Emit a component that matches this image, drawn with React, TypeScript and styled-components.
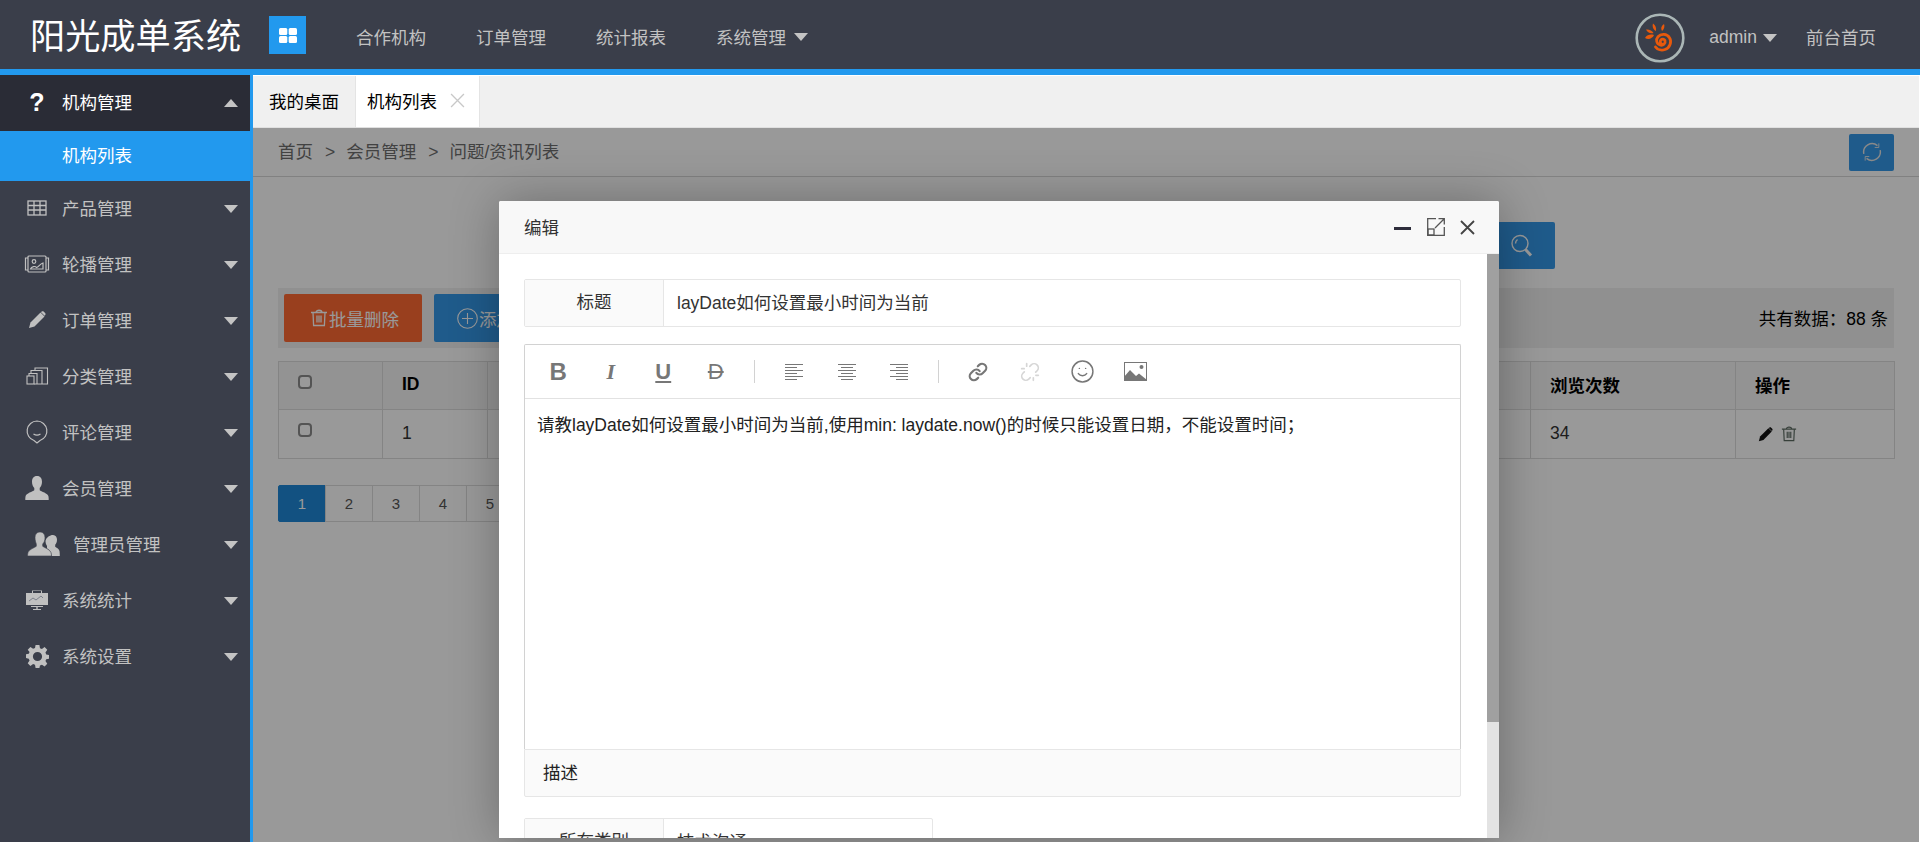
import React from "react";
import styled, { createGlobalStyle } from "styled-components";
import { Link, Unlink, Smile } from "lucide-react";

const Global = createGlobalStyle`
  html, body { margin: 0; padding: 0; background: #fff; overflow: hidden; }
  * { box-sizing: border-box; }
  body { font-family: "Liberation Sans", "Noto Sans CJK SC", sans-serif; font-size: 17.5px; color: #333; }
`;

const Shell = styled.div`
  width: 1920px; height: 842px; display: flex; flex-direction: column; overflow: hidden;
`;
const Header = styled.header`
  height: 75px; flex: none; background: #3a3e4a; border-bottom: 6px solid #2299ee;
  display: flex; align-items: center; color: #c2c2c2;
`;
const Brand = styled.div`
  width: 269px; padding: 5px 0 0 30px; font-size: 35.2px; color: #fff; line-height: 64px; height: 69px; white-space: nowrap; flex: none;
`;
const AppTile = styled.div`
  width: 37px; height: 38px; flex: none; background: #2299ee; margin-top: 1px;
  display: flex; align-items: center; justify-content: center;
`;
const Nav = styled.nav`
  display: flex; gap: 50px; margin-left: 50px; flex: 1; padding-top: 3px;
`;
const NavItem = styled.a`
  display: flex; align-items: center; gap: 8px; color: #c2c2c2; white-space: nowrap;
`;
const NavCaretSlot = styled.span`
  display: flex; padding-top: 2px;
`;
const Caret = styled.i<{ $up?: boolean }>`
  display: inline-block; width: 0; height: 0; flex: none;
  border-left: 7.5px solid transparent; border-right: 7.5px solid transparent;
  ${(p) => (p.$up ? "border-bottom: 8px solid #c4c4c4;" : "border-top: 8px solid #c4c4c4;")}
`;
const HeaderRight = styled.div`
  display: flex; align-items: center; padding: 3px 44px 0 0;
`;
const Avatar = styled.svg`
  width: 50px; height: 50px; margin: 3px 24px 0 0; display: block;
`;
const UserName = styled(NavItem)`
  margin-right: 29px; gap: 6px; padding-top: 2px;
`;

const Body = styled.div`
  flex: 1; display: flex; min-height: 0;
`;
const Sidebar = styled.aside`
  width: 253px; flex: none; background: #3a3e4a; border-right: 3px solid #2299ee; color: #c2c2c2;
`;
const MenuRow = styled.div<{ $active?: boolean }>`
  height: 56px; display: flex; align-items: center; padding: 0 12px 0 24px;
  background: ${(p) => (p.$active ? "#2a2c36" : "transparent")};
  color: ${(p) => (p.$active ? "#fff" : "#c2c2c2")};
`;
const MenuIcon = styled.span<{ $wide?: boolean }>`
  width: ${(p) => (p.$wide ? "38px" : "26px")}; margin: 0 ${(p) => (p.$wide ? "11px" : "12px")} 2px 0;
  flex: none; display: flex; align-items: center; justify-content: center;
`;
const QuestionMark = styled.b`
  font-size: 25px; color: #fff; line-height: 1;
`;
const MenuLabel = styled.span`
  flex: 1; white-space: nowrap; padding-bottom: 4px;
`;
const SubRow = styled.div`
  height: 50px; background: #2299ee; color: #fff; display: flex; align-items: center; padding: 0 0 3px 62px;
`;

const Main = styled.main`
  flex: 1; min-width: 0; margin-right: 1px; display: flex; flex-direction: column;
`;
const Tabs = styled.div`
  height: 53px; flex: none; display: flex; background: #f0f0f0; border-top: 1px solid #fff; border-bottom: 1px solid #e0e0e0; color: #000;
`;
const Tab = styled.div<{ $active?: boolean }>`
  display: flex; align-items: center; gap: 13px; white-space: nowrap; padding: 0 0 3px ${(p) => (p.$active ? "11px" : "16px")};
  width: ${(p) => (p.$active ? "125px" : "102px")};
  background: ${(p) => (p.$active ? "#fff" : "transparent")};
  ${(p) => p.$active && "border-left: 1px solid #e4e4e4; border-right: 1px solid #e4e4e4;"}
`;
const Frame = styled.div`
  flex: 1; position: relative; background: #fff; overflow: hidden;
`;
const Crumbs = styled.div`
  height: 49px; padding: 0 25px; display: flex; align-items: center; border-bottom: 1px solid #d8d8d8; color: #6e6e6e;
`;
const CrumbText = styled.span`
  padding-bottom: 3px;
`;
const CrumbSep = styled.span`
  margin: 0 11px 0 12px; font-family: "Liberation Sans", sans-serif;
`;
const RefreshButton = styled.div`
  margin-left: auto; width: 45px; height: 37px; background: #3498e8; border-radius: 2px;
  display: flex; align-items: center; justify-content: center;
`;
const SearchRow = styled.div`
  height: 111px; padding: 45px 364px 0 0; display: flex; justify-content: flex-end; align-items: flex-start;
`;
const SearchButton = styled.div`
  width: 120px; height: 47px; background: #3498e8; border-radius: 2px;
  display: flex; align-items: center; justify-content: flex-end; padding-right: 22px;
`;
const Section = styled.div`
  margin: 0 25px;
`;
const ToolBar = styled(Section)`
  height: 60px; background: #f0f0f0; display: flex; align-items: center; padding: 0 6px; margin-bottom: 13px; color: #000;
`;
const ActionButton = styled.div<{ $color: string; $start: number }>`
  height: 48px; border-radius: 2px; color: #fff; background: ${(p) => p.$color};
  display: flex; align-items: center; gap: 1px; white-space: nowrap;
  width: 138px; margin-right: 12px; padding-left: ${(p) => p.$start}px;
`;
const Total = styled.span`
  margin-left: auto; padding-bottom: 2px;
`;
const Table = styled.table`
  table-layout: fixed; width: 1616px; margin: 0 25px; border-collapse: collapse;
`;
const Th = styled.th`
  height: 48px; background: #f5f5f5; border: 1px solid #ddd; text-align: left; padding: 0 19px 2px; color: #000; font-size: 17.5px;
`;
const Td = styled.td`
  height: 49px; border: 1px solid #ddd; padding: 0 19px 2px; color: #333;
`;
const Col = styled.col<{ $w: number }>`
  width: ${(p) => p.$w}px;
`;
const Check = styled.span`
  display: block; width: 14px; height: 14px; border: 2px solid #8c8c8c; border-radius: 4px; background: #fff; margin-top: -6px;
`;
const RowIcons = styled.div`
  display: flex; align-items: center; gap: 8px; padding: 2px 0 0 3px;
`;
const Pager = styled(Section)`
  margin-top: 26px; display: flex; height: 37px;
`;
const PageLink = styled.span<{ $current?: boolean }>`
  width: 48px; display: flex; align-items: center; justify-content: center; font-size: 15px;
  color: ${(p) => (p.$current ? "#fff" : "#555")};
  background: ${(p) => (p.$current ? "#1e88d8" : "transparent")};
  border: 1px solid ${(p) => (p.$current ? "#1e88d8" : "#ddd")};
  margin-left: ${(p) => (p.$current ? "0" : "-1px")};
  ${(p) => p.$current && "border-radius: 2px 0 0 2px;"}
`;
const Shade = styled.div`
  position: absolute; inset: 0; background: rgba(0, 0, 0, 0.4);
`;
const Modal = styled.div`
  position: absolute; left: 246px; top: 73px; width: 1000px; height: 637px; background: #fff; overflow: hidden;
  border-radius: 2px 2px 0 0; box-shadow: 1px 1px 50px rgba(0, 0, 0, 0.3); display: flex; flex-direction: column;
`;
const ModalHead = styled.div`
  height: 53px; flex: none; background: #f8f8f8; border-bottom: 1px solid #eee;
  display: flex; align-items: center; padding: 0 24px 0 25px; color: #333;
`;
const ModalTitle = styled.span`
  flex: 1; padding-bottom: 2px;
`;
const ModalControls = styled.div`
  display: flex; align-items: center; gap: 15px;
`;
const ModalMain = styled.div`
  flex: 1; min-height: 0; display: flex;
`;
const ModalForm = styled.div`
  flex: 1; min-width: 0; padding: 25px 26px 0 25px; overflow: hidden;
`;
const ScrollTrack = styled.div`
  width: 12px; flex: none; background: #e3e3e3; display: flex; flex-direction: column;
`;
const ScrollThumb = styled.div`
  height: 468px; background: #a0a0a0;
`;
const Field = styled.div<{ $w?: number; $mb?: number }>`
  display: flex; height: 48px; border: 1px solid #e6e6e6; border-radius: 2px;
  width: ${(p) => (p.$w ? `${p.$w}px` : "auto")}; margin-bottom: ${(p) => p.$mb ?? 0}px;
`;
const FieldLabel = styled.div`
  width: 139px; flex: none; background: #fafafa; border-right: 1px solid #e6e6e6;
  display: flex; align-items: center; justify-content: center; padding-bottom: 5px;
`;
const FieldValue = styled.div`
  flex: 1; display: flex; align-items: center; padding: 0 0 3px 13px; white-space: nowrap;
`;
const Editor = styled.div`
  height: 405px; border: 1px solid #d2d2d2; border-bottom: none; border-radius: 2px 2px 0 0; display: flex; flex-direction: column;
`;
const EditorTools = styled.div`
  height: 54px; flex: none; border-bottom: 1px solid #e2e2e2; display: flex; align-items: center; padding-left: 7px;
`;
const Tool = styled.span`
  width: 52.5px; flex: none; display: flex; align-items: center; justify-content: center; color: #777;
`;
const ToolLetter = styled.span<{ $kind: "b" | "i" | "u" | "d" }>`
  font-size: 22px; line-height: 1;
  font-weight: ${(p) => (p.$kind === "d" ? 400 : 700)};
  ${(p) => p.$kind === "b" && "font-size: 24px;"}
  font-style: ${(p) => (p.$kind === "i" ? "italic" : "normal")};
  font-family: ${(p) => (p.$kind === "i" ? '"Liberation Serif", serif' : '"Liberation Sans", sans-serif')};
  text-decoration: ${(p) => (p.$kind === "u" ? "underline" : p.$kind === "d" ? "line-through" : "none")};
`;
const ToolSep = styled.span`
  width: 1px; height: 23px; flex: none; background: #d2d2d2; margin: 0 13px 0 12px;
`;
const EditorBody = styled.div`
  flex: 1; padding: 11px 12px; font-size: 17.5px; line-height: 30px; color: #222; white-space: nowrap;
`;
const EditorCaption = styled.div`
  height: 48px; border: 1px solid #e6e6e6; border-radius: 0 0 2px 2px; background: #fafafa;
  display: flex; align-items: center; padding: 0 0 4px 18px; margin-bottom: 21px; color: #222;
`;

const gray = "#c0c0c0";

const TableIcon = () => (
  <svg width="20" height="16" viewBox="0 0 20 16" fill="none" stroke={gray} strokeWidth="1.3">
    <rect x="1" y="1" width="18" height="14" />
    <path d="M1 5.5h18M1 10h18M7 1v14M13 1v14" />
  </svg>
);
const SlidesIcon = () => (
  <svg width="26" height="18" viewBox="0 0 26 18" fill="none" stroke={gray} strokeWidth="1.2">
    <rect x="4" y="1" width="18" height="16" rx="1" />
    <path d="M4 3H1.500v12H4M22 3h2.500v12H22" />
    <circle cx="10" cy="6.500" r="1.800" />
    <path d="M6.500 14c1-3 5-3 6-1.500 2-.5 3.500-3.500 6.500-4.500v6z" />
  </svg>
);
const PencilIcon = ({ size = 18, color = gray }: { size?: number; color?: string }) => (
  <svg width={size} height={size} viewBox="0 0 18 18" fill={color}>
    <path d="M1 17l1.500-5.500L12.500 1.500 16.500 5.500 6.500 15.500z" />
    <path d="M13.500.8c.8-.6 1.700-.6 2.300 0l1.300 1.300c.6.7.6 1.500 0 2.200l-.5.500-3.800-3.700z" />
  </svg>
);
const StackIcon = () => (
  <svg width="23" height="18" viewBox="0 0 23 18" fill="none" stroke={gray} strokeWidth="1.1">
    <rect x="1" y="9" width="7" height="8" />
    <path d="M3 9V6.500h8V17H8M5 6.500V3.500h11V17h-5M9 3.500V1h12.500v16H16" />
  </svg>
);
const BubbleIcon = () => (
  <svg width="22" height="24" viewBox="0 0 22 24" fill="none" stroke={gray} strokeWidth="1.2">
    <path d="M11 1a10 10 0 0 1 3 19.500L11 23l-3-2.500A10 10 0 0 1 11 1z" />
    <path d="M7.500 14c2 1.300 5 1.300 7 0" />
  </svg>
);
const UserIcon = () => (
  <svg width="24" height="24" viewBox="0 0 24 24" fill={gray}>
    <path d="M12 0c3.500 0 5 2.600 5 5.800 0 2.400-.8 4.700-2.300 6.200v2.300c1.300 1.200 8.300 3 8.800 6.200.2 1.200.2 2.600.2 3.500H.3c0-.9 0-2.300.2-3.500.5-3.200 7.500-5 8.800-6.200V12C7.800 10.500 7 8.200 7 5.800 7 2.600 8.500 0 12 0z" />
  </svg>
);
const UsersIcon = () => (
  <svg width="33" height="24" viewBox="0 0 33 24" fill={gray}>
    <path d="M26 3c2.800 0 4 2.200 4 4.800 0 2-.6 3.700-1.800 5v2c1 .9 3.800 2 4.300 4.200.2 1.500.3 3 .3 5h-8.300c0-3-1-5-3-6.500l-1.500-1v-2.500c-1-1.400-1.500-3-1.500-5.200C19.500 5.200 22.800 3 26 3z" />
    <path d="M13 0c3.500 0 5 2.600 5 5.800 0 2.400-.8 4.700-2.300 6.200v2.300c1.300 1.200 7.300 3 8.300 6.200.3 1 .5 2.600.5 3.500H.5c0-.9.2-2.500.5-3.500 1-3.200 7-5 8.300-6.200V12C8.800 10.500 8 8.200 8 5.800 8 2.600 9.500 0 13 0z" stroke="#3a3e4a" strokeWidth=".6" />
  </svg>
);
const BoardIcon = () => (
  <svg width="24" height="20" viewBox="0 0 24 20" fill={gray}>
    <path d="M8 3V1h8v2h1V.5H7V3z" />
    <rect x="1" y="3" width="22" height="12" />
    <path d="M4 11l4-3 3 2 5-4 2 2" fill="none" stroke="#7d818c" strokeWidth="1" />
    <path d="M6 16h12v1h-5.300v2H16v1H8v-1h3.300v-2H6z" />
  </svg>
);
const GearIcon = () => (
  <svg width="23" height="23" viewBox="0 0 24 24" fill={gray}>
    <path
      fillRule="evenodd"
      d="M10 0h4l.6 3.300 2 .8L19.400 2.200l2.800 2.800-1.900 2.800.8 2 3.300.6v3.800l-3.300.7-.8 1.900 1.900 2.800-2.800 2.800-2.800-1.900-2 .8L14 24h-4l-.6-3.300-2-.8-2.800 1.900L1.800 19l1.900-2.800-.8-1.900L-.4 13.600V9.800L2.900 9.200l.8-2L1.800 4.900 4.600 2.200 7.400 4l2-.8zM12 7.200a4.800 4.800 0 1 0 0 9.600 4.800 4.800 0 0 0 0-9.600z"
    />
  </svg>
);
const Refresh = () => (
  <svg width="20" height="20" viewBox="0 0 22 22" fill="none" stroke="#e4e4e4" strokeWidth="1.6">
    <path d="M2 13A9.300 9.300 0 0 1 17 4" />
    <path d="M20 9a9.300 9.300 0 0 1-15 9" />
    <path d="M18.500 1.500V6h-4.500M3.500 20.500V16H8" strokeWidth="1" />
  </svg>
);
const Search = () => (
  <svg width="22" height="24" viewBox="0 0 22 24" fill="none" stroke="#fff" strokeWidth="1.400">
    <circle cx="9" cy="9.500" r="8" />
    <path d="M4.500 9.500c0-2 1-3.200 2-4" />
    <path d="M14.500 15.500l5.500 6" strokeWidth="3" />
  </svg>
);
const TrashIcon = ({ color = "#fff", size = 18 }: { color?: string; size?: number }) => (
  <svg width={size} height={size} viewBox="0 0 18 18" fill="none" stroke={color} strokeWidth="1.300">
    <path d="M1 3.500h16M6 3.500c0-3 6-3 6 0" />
    <path d="M3 3.500l.6 13h10.800l.6-13" />
    <path d="M7 6.500v7M9 6.500v7M11 6.500v7" />
  </svg>
);
const PlusCircle = () => (
  <svg width="21" height="21" viewBox="0 0 21 21" fill="none" stroke="#fff" strokeWidth="1.100">
    <circle cx="10.500" cy="10.500" r="9.800" />
    <path d="M10.500 5v11M5 10.500h11" />
  </svg>
);
const AlignIcon = ({ mode }: { mode: "l" | "c" | "r" }) => {
  const rows = [18, 12, 18, 12, 18, 12];
  return (
    <svg width="18" height="18" viewBox="0 0 18 18" stroke="#777" strokeWidth="1">
      {rows.map((w, i) => {
        const x = mode === "l" ? 0 : mode === "c" ? (18 - w) / 2 : 18 - w;
        return <line key={i} x1={x} x2={x + w} y1={1.5 + i * 3} y2={1.5 + i * 3} />;
      })}
    </svg>
  );
};
const PictureIcon = () => (
  <svg width="23" height="19" viewBox="0 0 23 19">
    <rect x=".5" y=".5" width="22" height="18" fill="#fff" stroke="#777" />
    <circle cx="17.500" cy="5" r="2" fill="#777" />
    <path d="M0 19v-4l6-7 6 6 3-2.500 8 6.500v1z" fill="#777" />
  </svg>
);

const menu: { label: string; icon: React.ReactNode; wide?: boolean }[] = [
  { label: "产品管理", icon: <TableIcon /> },
  { label: "轮播管理", icon: <SlidesIcon /> },
  { label: "订单管理", icon: <PencilIcon /> },
  { label: "分类管理", icon: <StackIcon /> },
  { label: "评论管理", icon: <BubbleIcon /> },
  { label: "会员管理", icon: <UserIcon /> },
  { label: "管理员管理", icon: <UsersIcon />, wide: true },
  { label: "系统统计", icon: <BoardIcon /> },
  { label: "系统设置", icon: <GearIcon /> },
];

export default function App() {
  return (
    <Shell>
      <Global />
      <Header>
        <Brand>阳光成单系统</Brand>
        <AppTile>
          <svg width="18" height="15" viewBox="0 0 18 15" fill="#fff">
            <rect width="8.300" height="7" rx="1.500" />
            <rect x="9.700" width="8.300" height="7" rx="1.500" />
            <rect y="8" width="8.300" height="7" rx="1.500" />
            <rect x="9.700" y="8" width="8.300" height="7" rx="1.500" />
          </svg>
        </AppTile>
        <Nav>
          <NavItem>合作机构</NavItem>
          <NavItem>订单管理</NavItem>
          <NavItem>统计报表</NavItem>
          <NavItem>
            系统管理
            <NavCaretSlot>
              <Caret />
            </NavCaretSlot>
          </NavItem>
        </Nav>
        <HeaderRight>
          <Avatar viewBox="0 0 50 50">
            <circle cx="25" cy="25" r="23.300" fill="none" stroke="#aab6b6" strokeWidth="2.600" />
            <path
              d="M27 31a2.500 2.500 0 1 1 3-3.500c.8 2.800-2 5.500-5 4.500-3.500-1-4.500-5.500-2-8.300 3-3.300 9-3 11.500 1 2.500 4 .5 10-4.500 11.800-3.500 1.200-7.500.3-9.500-2.500"
              fill="none"
              stroke="#e8590c"
              strokeWidth="2.800"
              strokeLinecap="round"
            />
            <path d="M10 25c2-3.500 6-4 9-3-1.500 3.500-5.500 5-9 3z" fill="#e8590c" />
            <path d="M11 16.500c3-.5 6 1 7.500 3.500-3.500.8-6.300-.8-7.500-3.500z" fill="#e8590c" />
            <path d="M18 10.500c2.500 1.500 3.500 4.500 3 7.500-2.800-1.300-4-4.500-3-7.500z" fill="#e8590c" />
            <path d="M29 11c1 2.500.2 5-2 7-1.500-2.500-.8-5.300 2-7z" fill="#e8590c" />
          </Avatar>
          <UserName>
            admin
            <NavCaretSlot>
              <Caret />
            </NavCaretSlot>
          </UserName>
          <NavItem>前台首页</NavItem>
        </HeaderRight>
      </Header>
      <Body>
        <Sidebar>
          <MenuRow $active>
            <MenuIcon>
              <QuestionMark>?</QuestionMark>
            </MenuIcon>
            <MenuLabel>机构管理</MenuLabel>
            <Caret $up />
          </MenuRow>
          <SubRow>机构列表</SubRow>
          {menu.map((m) => (
            <MenuRow key={m.label}>
              <MenuIcon $wide={m.wide}>{m.icon}</MenuIcon>
              <MenuLabel>{m.label}</MenuLabel>
              <Caret />
            </MenuRow>
          ))}
        </Sidebar>
        <Main>
          <Tabs>
            <Tab>我的桌面</Tab>
            <Tab $active>
              机构列表
              <svg width="15" height="15" viewBox="0 0 14 14" stroke="#c8c8c8" strokeWidth="1.200">
                <path d="M1 1l12 12M13 1L1 13" />
              </svg>
            </Tab>
          </Tabs>
          <Frame>
            <Crumbs>
              <CrumbText>
                首页<CrumbSep>&gt;</CrumbSep>会员管理<CrumbSep>&gt;</CrumbSep>问题/资讯列表
              </CrumbText>
              <RefreshButton>
                <Refresh />
              </RefreshButton>
            </Crumbs>
            <SearchRow>
              <SearchButton>
                <Search />
              </SearchButton>
            </SearchRow>
            <ToolBar>
              <ActionButton $color="#ff6a33" $start={26}>
                <TrashIcon />
                批量删除
              </ActionButton>
              <ActionButton $color="#3498e8" $start={23}>
                <PlusCircle />
                添加
              </ActionButton>
              <Total>共有数据：88 条</Total>
            </ToolBar>
            <Table>
              <colgroup>
                <Col $w={104} />
                <Col $w={105} />
                <Col $w={1043} />
                <Col $w={205} />
                <Col $w={159} />
              </colgroup>
              <thead>
                <tr>
                  <Th>
                    <Check />
                  </Th>
                  <Th>ID</Th>
                  <Th />
                  <Th>浏览次数</Th>
                  <Th>操作</Th>
                </tr>
              </thead>
              <tbody>
                <tr>
                  <Td>
                    <Check />
                  </Td>
                  <Td>1</Td>
                  <Td />
                  <Td>34</Td>
                  <Td>
                    <RowIcons>
                      <PencilIcon size={15} color="#111" />
                      <TrashIcon size={16} color="#5c6b62" />
                    </RowIcons>
                  </Td>
                </tr>
              </tbody>
            </Table>
            <Pager>
              {[1, 2, 3, 4, 5].map((n) => (
                <PageLink key={n} $current={n === 1}>
                  {n}
                </PageLink>
              ))}
            </Pager>
            <Shade />
            <Modal>
              <ModalHead>
                <ModalTitle>编辑</ModalTitle>
                <ModalControls>
                  <svg width="18" height="18" viewBox="0 0 18 18" fill="#2e2d3c">
                    <rect x="0" y="9" width="17" height="3" />
                  </svg>
                  <svg width="18" height="18" viewBox="0 0 18 18" fill="none" stroke="#555" strokeWidth="1.300">
                    <path d="M9 .7H.7v16.600h16.600V9" />
                    <rect x="1" y="11" width="6" height="6" />
                    <path d="M8 10L17 1M11.500.7h5.800v5.800" />
                  </svg>
                  <svg width="15" height="15" viewBox="0 0 15 15" stroke="#444" strokeWidth="1.800">
                    <path d="M1 1l13 13M14 1L1 14" />
                  </svg>
                </ModalControls>
              </ModalHead>
              <ModalMain>
                <ModalForm>
                  <Field $mb={17}>
                    <FieldLabel>标题</FieldLabel>
                    <FieldValue>layDate如何设置最小时间为当前</FieldValue>
                  </Field>
                  <Editor>
                    <EditorTools>
                      <Tool>
                        <ToolLetter $kind="b">B</ToolLetter>
                      </Tool>
                      <Tool>
                        <ToolLetter $kind="i">I</ToolLetter>
                      </Tool>
                      <Tool>
                        <ToolLetter $kind="u">U</ToolLetter>
                      </Tool>
                      <Tool>
                        <ToolLetter $kind="d">D</ToolLetter>
                      </Tool>
                      <ToolSep />
                      <Tool>
                        <AlignIcon mode="l" />
                      </Tool>
                      <Tool>
                        <AlignIcon mode="c" />
                      </Tool>
                      <Tool>
                        <AlignIcon mode="r" />
                      </Tool>
                      <ToolSep />
                      <Tool>
                        <Link size={20} strokeWidth={2.6} />
                      </Tool>
                      <Tool>
                        <Unlink size={20} strokeWidth={2} color="#d6d6d6" />
                      </Tool>
                      <Tool>
                        <Smile size={25} strokeWidth={1.4} />
                      </Tool>
                      <Tool>
                        <PictureIcon />
                      </Tool>
                    </EditorTools>
                    <EditorBody>请教layDate如何设置最小时间为当前,使用min: laydate.now()的时候只能设置日期，不能设置时间；</EditorBody>
                  </Editor>
                  <EditorCaption>描述</EditorCaption>
                  <Field $w={409}>
                    <FieldLabel>所在类别</FieldLabel>
                    <FieldValue>技术沟通</FieldValue>
                  </Field>
                </ModalForm>
                <ScrollTrack>
                  <ScrollThumb />
                </ScrollTrack>
              </ModalMain>
            </Modal>
          </Frame>
        </Main>
      </Body>
    </Shell>
  );
}
